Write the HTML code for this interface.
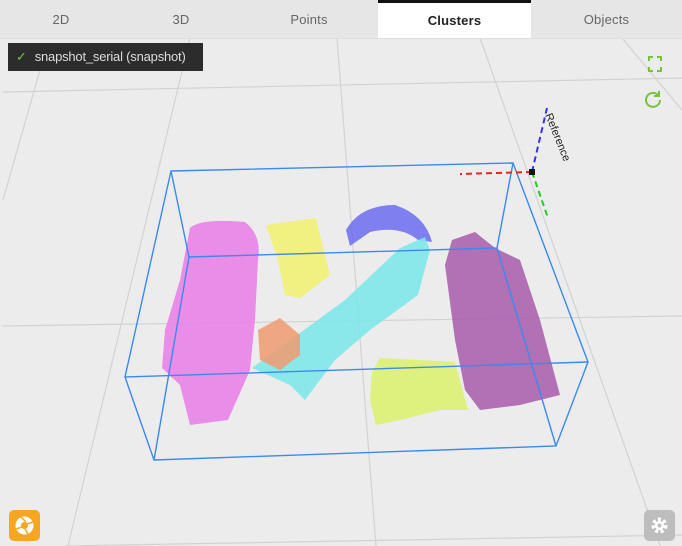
<!DOCTYPE html>
<html><head><style>
body{margin:0;width:682px;height:546px;overflow:hidden;background:#ececec;font-family:"Liberation Sans",sans-serif}
.tabs{position:absolute;top:0;left:0;width:682px;height:38px;background:#e6e6e6;border-bottom:1px solid #ddd}
.tab{position:absolute;top:0;height:38px;line-height:40px;text-align:center;font-size:13px;color:#666;font-weight:500;letter-spacing:0.2px}
.act{background:#fff;color:#222;font-weight:bold;border-top:3px solid #111;box-sizing:border-box;line-height:36px}
.badge{position:absolute;left:8px;top:43px;width:195px;height:28px;background:#2c2c2c;color:#ddd;font-size:13px;line-height:28px;white-space:nowrap;overflow:hidden;letter-spacing:-0.2px}
</style></head><body>
<svg width="682" height="546" style="position:absolute;left:0;top:0">
<g stroke="#d2d2d2" stroke-width="1.2" fill="none">
<line x1="3" y1="92" x2="682" y2="78"/><line x1="3" y1="326" x2="682" y2="316"/><line x1="65" y1="546" x2="682" y2="535"/>
<line x1="337" y1="38" x2="376" y2="546"/><line x1="190" y1="38" x2="68" y2="546"/><line x1="40" y1="70" x2="3" y2="200"/>
<line x1="480" y1="38" x2="660" y2="546"/><line x1="622" y1="38" x2="682" y2="110"/>
</g>
<g fill-opacity="0.85">
<path d="M190 228 Q200 218 245 222 Q262 235 258 260 L255 320 L250 370 L228 420 L190 425 L180 385 L162 368 L165 330 L180 280 Z" fill="#ea7ce8"/>
<path d="M266 225 L316 218 L325 255 L330 275 L300 298 L285 295 L278 260 Z" fill="#f2f26e"/>
<path d="M346 230 Q360 205 395 205 Q425 215 432 242 L418 240 Q400 225 370 232 L350 246 Z" fill="#6c6cf0"/>
<path d="M252 368 L345 300 L400 248 L425 237 L430 250 L418 295 L370 330 L335 360 L305 400 L290 385 Z" fill="#7ae8ea"/>
<path d="M258 330 L280 318 L300 335 L300 355 L280 370 L260 360 Z" fill="#f09a70"/>
<path d="M445 265 L452 240 L475 232 L495 248 L520 260 L540 320 L560 395 L520 405 L480 410 L465 390 L455 340 Z" fill="#a85aac"/>
<path d="M372 372 L380 358 L420 360 L455 362 L468 410 L440 410 L400 420 L376 425 L370 400 Z" fill="#dcf26c"/>
</g>
<g stroke="#3a8aee" stroke-width="1.4" fill="none">
<polygon points="171,171 513,163 588,362 556,446 154,460 125,377"/>
<line x1="125" y1="377" x2="588" y2="362"/>
<polyline points="171,171 189,257 497,248 513,163"/>
<line x1="189" y1="257" x2="154" y2="460"/><line x1="497" y1="248" x2="556" y2="446"/>
</g>
<line x1="532" y1="172" x2="460" y2="174" stroke="#e22" stroke-width="2" stroke-dasharray="6,4"/>
<line x1="532" y1="172" x2="547" y2="108" stroke="#33e" stroke-width="2" stroke-dasharray="6,4"/>
<line x1="532" y1="172" x2="548" y2="218" stroke="#2c2" stroke-width="2" stroke-dasharray="6,4"/>
<rect x="529" y="169" width="6" height="6" fill="#111"/>
<text x="545" y="115" font-size="11" fill="#222" transform="rotate(68 545 115)">Reference</text>
<g stroke="#7ac142" stroke-width="2" fill="none">
<path d="M649 61v-4h4M657 57h4v4M661 67v4h-4M653 71h-4v-4"/>
<path d="M660 100a7 7 0 1 1-2-5"/><path d="M659 91v5h-5" />
</g>
<rect x="9" y="510" width="31" height="31" rx="5" fill="#f6a623"/>
<circle cx="24.5" cy="525.5" r="9" fill="#fff"/><circle cx="24.5" cy="525.5" r="3.5" fill="#f6a623"/>
<g stroke="#f6a623" stroke-width="1.5"><line x1="21" y1="517" x2="26" y2="522"/><line x1="33" y1="522" x2="27" y2="524"/><line x1="28" y1="534" x2="25" y2="529"/><line x1="16" y1="529" x2="22" y2="527"/></g>
<rect x="644" y="510" width="31" height="31" rx="5" fill="#bdbdbd"/>
<circle cx="659.5" cy="525.5" r="6" fill="none" stroke="#fff" stroke-width="4" stroke-dasharray="3,2.3"/>
<circle cx="659.5" cy="525.5" r="4.5" fill="#fff"/><circle cx="659.5" cy="525.5" r="2" fill="#bdbdbd"/>
</svg>
<div class="tabs">
<div class="tab" style="left:0;width:122px">2D</div>
<div class="tab" style="left:122px;width:118px">3D</div>
<div class="tab" style="left:240px;width:138px">Points</div>
<div class="tab act" style="left:378px;width:153px">Clusters</div>
<div class="tab" style="left:531px;width:151px">Objects</div>
</div>
<div class="badge"><span style="color:#7ac142;margin:0 8px 0 8px">✓</span>snapshot_serial (snapshot)</div>
</body></html>
